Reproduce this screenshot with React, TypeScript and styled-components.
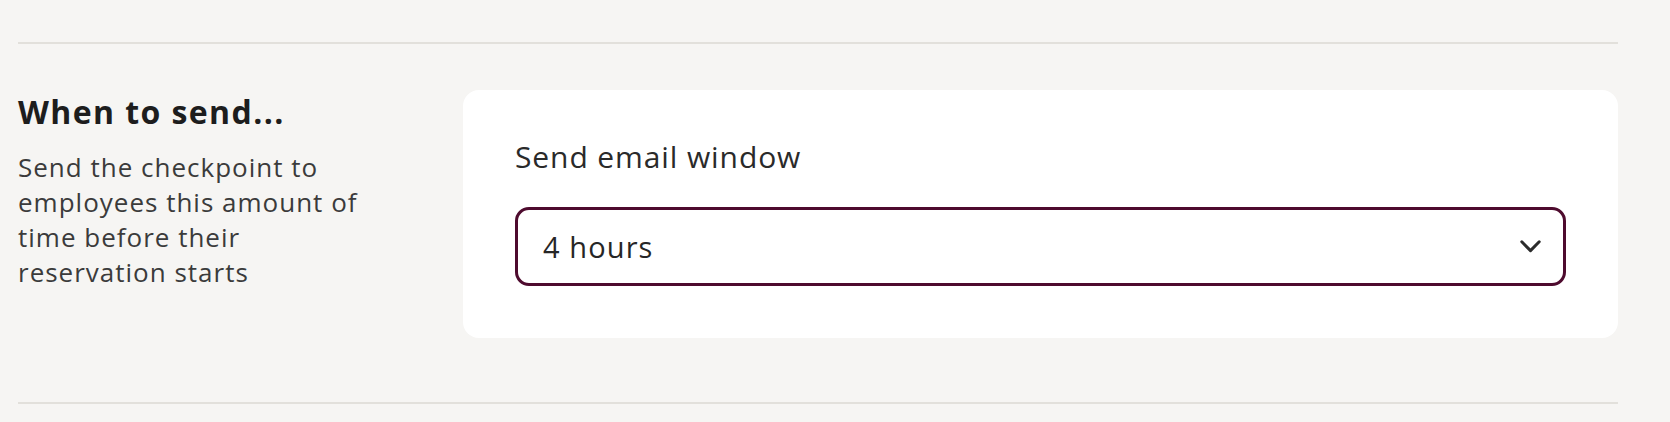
import React from "react";
import styled, { createGlobalStyle } from "styled-components";

const GlobalStyle = createGlobalStyle`
  html, body {
    margin: 0;
    padding: 0;
    background: #f6f5f3;
  }
  body {
    font-family: "Open Sans", Lato, sans-serif;
    -webkit-font-smoothing: antialiased;
  }
`;

const Page = styled.div`
  padding: 42px 52px 0 18px;
`;

const Divider = styled.hr`
  margin: 0;
  border: none;
  height: 2px;
  background: #e2e0db;
`;

const Section = styled.section`
  display: grid;
  grid-template-columns: 445px 1fr;
  padding: 46px 0 64px;
`;

const Intro = styled.div`
  display: flex;
  flex-direction: column;
`;

const Title = styled.h2`
  margin: 0 0 16px;
  font-size: 32px;
  line-height: 44px;
  font-weight: 700;
  letter-spacing: 1.4px;
  color: #1d1d1d;
`;

const Description = styled.p`
  margin: 0;
  max-width: 352px;
  font-size: 26px;
  line-height: 35px;
  letter-spacing: 1px;
  color: #3b3b3b;
`;

const Card = styled.div`
  background: #ffffff;
  border-radius: 16px;
  padding: 52px;
  display: flex;
  flex-direction: column;
  gap: 36px;
`;

const Label = styled.label`
  font-size: 30px;
  line-height: 29px;
  letter-spacing: 0.9px;
  color: #2a2a2a;
`;

const SelectBox = styled.button`
  display: flex;
  align-items: center;
  justify-content: space-between;
  box-sizing: border-box;
  height: 79px;
  width: 100%;
  padding: 0 22px 0 25px;
  border: 3px solid #4e0b2e;
  border-radius: 14px;
  background: #ffffff;
  font-family: inherit;
  font-size: 29px;
  letter-spacing: 1.1px;
  color: #262626;
  cursor: pointer;
  text-align: left;
`;

const Chevron = () => (
  <svg width="21" height="13" viewBox="0 0 21 13" fill="none">
    <path
      d="M1.8 1.8 L10.5 10.6 L19.2 1.8"
      stroke="#2b2b2b"
      strokeWidth="3"
      strokeLinecap="round"
      strokeLinejoin="round"
    />
  </svg>
);

const App = () => {
  return (
    <>
      <GlobalStyle />
      <Page>
        <Divider />
        <Section>
          <Intro>
            <Title>When to send...</Title>
            <Description>
              Send the checkpoint to employees this amount of time before their
              reservation starts
            </Description>
          </Intro>
          <Card>
            <Label>Send email window</Label>
            <SelectBox type="button">
              <span>4 hours</span>
              <Chevron />
            </SelectBox>
          </Card>
        </Section>
        <Divider />
      </Page>
    </>
  );
};

export default App;
